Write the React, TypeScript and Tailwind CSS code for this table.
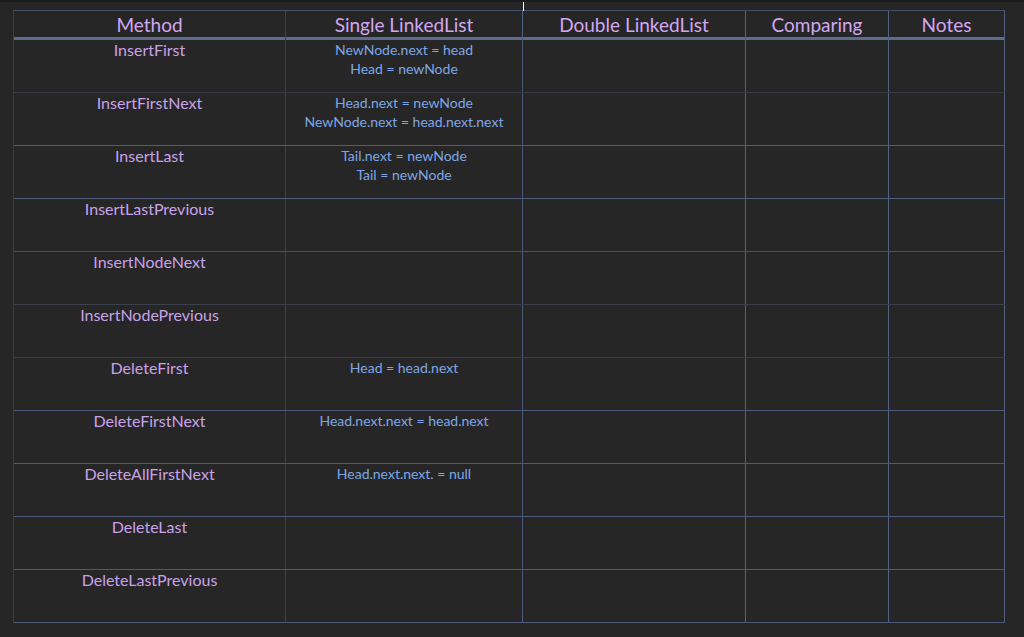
import React from 'react';

type Row = { method: string; single: string[]; line: string };

// row separator colours vary a little in the screenshot
const rows: Row[] = [
  { method: 'InsertFirst', single: ['NewNode.next = head', 'Head = newNode'], line: 'border-b-[#363a44]' },
  { method: 'InsertFirstNext', single: ['Head.next = newNode', 'NewNode.next = head.next.next'], line: 'border-b-[#4f5d7a]' },
  { method: 'InsertLast', single: ['Tail.next = newNode', 'Tail = newNode'], line: 'border-b-[#4f5d7a]' },
  { method: 'InsertLastPrevious', single: [], line: 'border-b-[#465269]' },
  { method: 'InsertNodeNext', single: [], line: 'border-b-[#3b404c]' },
  { method: 'InsertNodePrevious', single: [], line: 'border-b-[#393d4a]' },
  { method: 'DeleteFirst', single: ['Head = head.next'], line: 'border-b-[#4c5a78]' },
  { method: 'DeleteFirstNext', single: ['Head.next.next = head.next'], line: 'border-b-[#4c5a78]' },
  { method: 'DeleteAllFirstNext', single: ['Head.next.next. = null'], line: 'border-b-[#4c5a78]' },
  { method: 'DeleteLast', single: [], line: 'border-b-[#4c5a78]' },
  { method: 'DeleteLastPrevious', single: [], line: 'border-b-[#4c5a78]' },
];

const headers = ['Method', 'Single LinkedList', 'Double LinkedList', 'Comparing', 'Notes'];
const cols = 'grid grid-cols-[272px_237px_223px_143px_116px]';

export default function App() {
  return (
    <div className="relative w-[1024px] h-[637px] overflow-hidden bg-[#262626] border-t-2 border-[#1b1b1b] font-['Lato',sans-serif]">
      {/* stray text cursor at the top */}
      <div className="absolute left-[523px] top-0 h-[9px] w-px bg-white" />

      <div className="ml-[13px] mt-[8px] w-[992px] border-t border-[#46516a] border-l border-l-[#3a3e49]">
        <div className={`${cols} h-[29px] border-b-[3px] border-b-[#5b6c90]`}>
          {headers.map((h, i) => (
            <div
              key={h}
              className={`flex items-center justify-center pb-[2px] text-[19px] text-[#d3a6f2] border-r ${
                i === 0 ? 'border-r-[#3c404b]' : 'border-r-[#52617f]'
              }`}
            >
              {h}
            </div>
          ))}
        </div>

        {rows.map((r) => (
          <div key={r.method} className={`${cols} h-[53px] border-b ${r.line}`}>
            <div className="border-r border-r-[#3c404b] text-center text-[16px] leading-[20px] text-[#c9a2ea]">
              {r.method}
            </div>
            <div className="border-r border-r-[#4c5a78] text-center text-[14px] leading-[19px] text-[#7ea6e6]">
              {r.single.map((s) => (
                <div key={s}>{s}</div>
              ))}
            </div>
            <div className="border-r border-r-[#52617f]" />
            <div className="border-r border-r-[#52617f]" />
            <div className="border-r border-r-[#52617f]" />
          </div>
        ))}
      </div>
    </div>
  );
}
